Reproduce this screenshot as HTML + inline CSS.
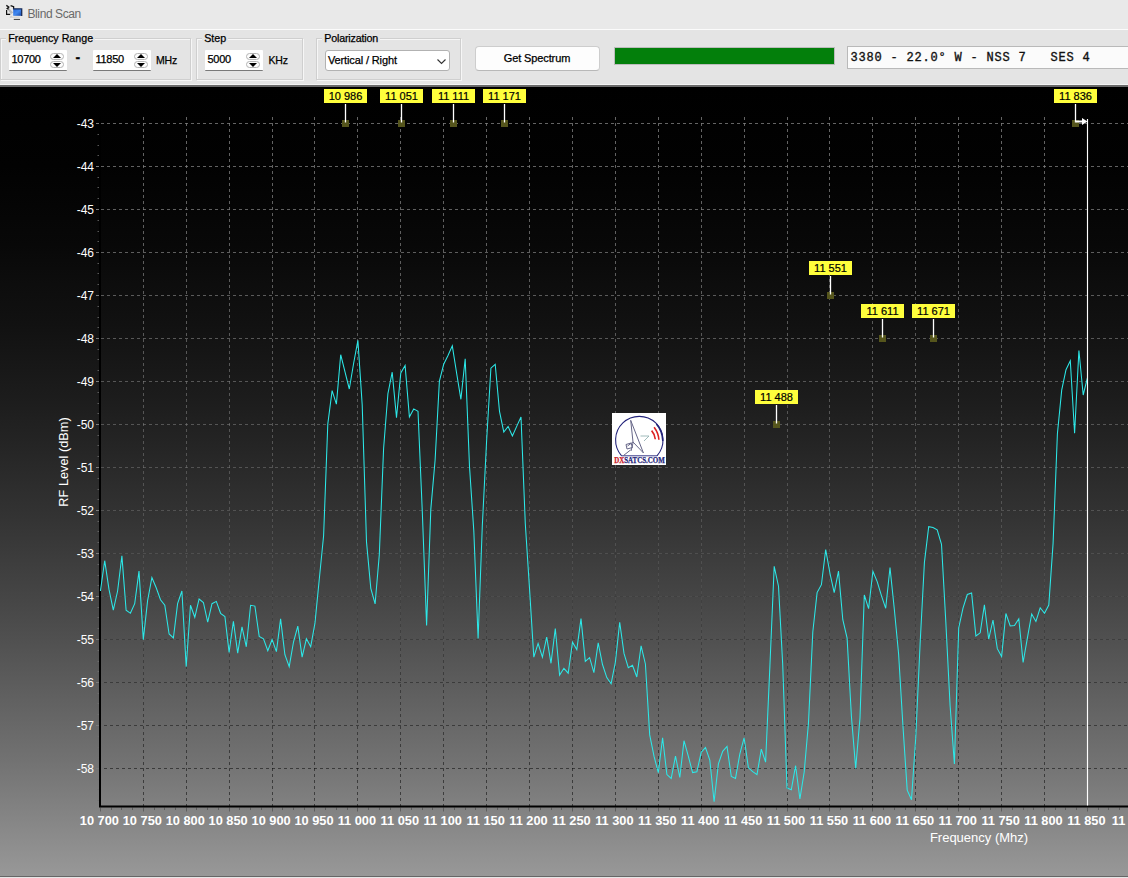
<!DOCTYPE html>
<html><head><meta charset="utf-8"><title>Blind Scan</title>
<style>
html,body{margin:0;padding:0;}
body{width:1128px;height:878px;overflow:hidden;background:#e4e4e4;font-family:"Liberation Sans",sans-serif;font-size:11px;color:#000;position:relative;}
.abs{position:absolute;}
#title{left:0;top:0;width:1128px;height:30px;background:#e9e9e9;border-bottom:1.5px solid #fbfbfb;box-sizing:border-box;}
#title span{position:absolute;left:27.5px;top:6.5px;font-size:12px;color:#6a6a6a;letter-spacing:-0.4px;}
.gb{position:absolute;margin-left:-0.5px;top:38px;height:42px;border:1px solid #cfcfcf;box-sizing:border-box;box-shadow:1px 1px 0 #f6f6f6, inset 1px 1px 0 #f6f6f6;}
.gb b{position:absolute;left:5.2px;top:-7px;background:#e4e4e4;padding:0 2px;font-weight:normal;font-size:10.7px;line-height:12px;white-space:nowrap;-webkit-text-stroke:0.25px #000;}
.inp{position:absolute;top:50px;height:21px;width:58px;background:#fff;border-bottom:1.5px solid #7a7a7a;box-sizing:border-box;border-radius:1px;}
.inp span{position:absolute;left:2.5px;top:2.6px;font-size:11px;letter-spacing:-0.3px;line-height:12px;-webkit-text-stroke:0.25px #000;}
.sp{position:absolute;left:41px;width:14px;height:7.5px;border:1px solid #b4b4b4;border-radius:4px;box-sizing:border-box;background:#fdfdfd;}
.sp.u{top:2.5px;} .sp.d{top:10.5px;}
.sp i{position:absolute;left:2px;width:0;height:0;border-left:4px solid transparent;border-right:4px solid transparent;}
.sp.u i{top:0.5px;border-bottom:4px solid #000;}
.sp.d i{top:1px;border-top:4px solid #000;}
.lbl{position:absolute;font-size:10.5px;letter-spacing:-0.2px;line-height:12px;-webkit-text-stroke:0.25px #000;white-space:nowrap;}
#combo{left:324.5px;top:49.5px;width:125px;height:21px;background:#fff;border:1px solid #b2b2b2;border-radius:3px;box-sizing:border-box;}
#combo span{position:absolute;left:2.5px;top:3.5px;font-size:11px;letter-spacing:-0.13px;line-height:12px;-webkit-text-stroke:0.25px #000;white-space:nowrap;}
#btn{left:474.5px;top:46px;width:125px;height:24.5px;background:#fdfdfd;border:1px solid #cdcdcd;border-bottom-color:#b8b8b8;border-radius:4px;box-sizing:border-box;text-align:center;}
#btn span{font-size:11px;letter-spacing:-0.12px;line-height:22px;-webkit-text-stroke:0.25px #000;}
#prog{left:613.5px;top:46.5px;width:221.5px;height:18.5px;background:#037f0b;border:1px solid #bcbcbc;box-sizing:border-box;}
#txt{left:846.5px;top:45.6px;width:281.5px;height:23px;background:#fbfbfb;border:1px solid #b9b9b9;border-right:none;box-sizing:border-box;overflow:hidden;}
#txt span{position:absolute;left:3px;top:4.6px;font-family:"Liberation Mono",monospace;font-size:12px;letter-spacing:0.8px;line-height:15px;white-space:pre;color:#111;-webkit-text-stroke:0.35px #111;}
#sep1{left:0;top:83.5px;width:1128px;height:1.5px;background:#f4f4f4;}
#sep2{left:0;top:85px;width:1128px;height:2px;background:#6a6a6a;}
#chart{left:0;top:87px;width:1128px;height:789px;}
#bot1{left:0;top:875.7px;width:1128px;height:1.3px;background:#666;}
#bot2{left:0;top:877px;width:1128px;height:1px;background:#e6e6e6;}
svg text{font-family:"Liberation Sans",sans-serif;}
.yl{font-size:12px;fill:#fff;}
.xl{font-size:12.8px;font-weight:bold;fill:#fff;}
.ttl{font-size:13px;fill:#fff;}
.ml{font-size:11px;fill:#000;stroke:#000;stroke-width:0.2px;}
.lg{font-family:"Liberation Serif",serif;font-weight:bold;font-size:8px;stroke-width:0.25px;}
</style></head><body>
<div id="title" class="abs">
<svg class="abs" style="left:0px;top:0px" width="26" height="24" viewBox="0 0 26 24">
<defs><linearGradient id="mon" x1="0" y1="0" x2="1" y2="1"><stop offset="0" stop-color="#2466d8"/><stop offset="0.5" stop-color="#4088f0"/><stop offset="1" stop-color="#1544a4"/></linearGradient></defs>
<path d="M8.2 7.2 L13.2 12.6 L11 14 L7.4 9.6 Z" fill="#b9b9b9"/>
<path d="M6.3 5.4 L8.8 7 L7.2 8.6 L8.6 9.2 M10.6 5.6 L13.6 6.6 L13.6 9" fill="none" stroke="#111" stroke-width="1.3"/>
<path d="M6.6 10 V14.3 H10.2" fill="none" stroke="#111" stroke-width="1.2"/>
<rect x="13.2" y="8.8" width="8.4" height="7" fill="url(#mon)"/>
<path d="M13 8.9 H21.7 V16" fill="none" stroke="#1a2c58" stroke-width="1.3"/>
<path d="M10.5 17.3 H19.5 M11.5 16.2 L10 17.6" stroke="#c9c9c9" stroke-width="1.1" fill="none"/>
<path d="M10.2 18.3 H19.8" stroke="#f4f4f4" stroke-width="0.9"/>
<path d="M13.8 19.4 H20" stroke="#222" stroke-width="0.9"/>
</svg>
<span>Blind Scan</span></div>
<div class="gb" style="left:0.5px;width:190.5px;"><b>Frequency Range</b></div>
<div class="gb" style="left:196.5px;width:106.5px;"><b>Step</b></div>
<div class="gb" style="left:316.5px;width:144.5px;"><b style="letter-spacing:-0.16px">Polarization</b></div>
<div class="inp" style="left:9px"><span>10700</span><div class="sp u"><i></i></div><div class="sp d"><i></i></div></div>
<div class="lbl" style="left:75.5px;top:50.5px;font-size:14px;font-weight:bold;">-</div>
<div class="inp" style="left:93px"><span>11850</span><div class="sp u"><i></i></div><div class="sp d"><i></i></div></div>
<div class="lbl" style="left:156px;top:54px;">MHz</div>
<div class="inp" style="left:205px"><span>5000</span><div class="sp u"><i></i></div><div class="sp d"><i></i></div></div>
<div class="lbl" style="left:268.5px;top:54px;">KHz</div>
<div id="combo" class="abs"><span>Vertical / Right</span>
<svg class="abs" style="left:110px;top:7px" width="11" height="7" viewBox="0 0 11 7"><path d="M1.5 1.5 L5.5 5.5 L9.5 1.5" fill="none" stroke="#333" stroke-width="1.1"/></svg></div>
<div id="btn" class="abs"><span>Get Spectrum</span></div>
<div id="prog" class="abs"></div>
<div id="txt" class="abs"><span>3380 - 22.0° W - NSS 7   SES 4</span></div>
<div id="sep1" class="abs"></div><div id="sep2" class="abs"></div>
<svg id="chart" class="abs" width="1128" height="789" viewBox="0 0 1128 789">
<defs><linearGradient id="bg" x1="0" y1="0" x2="0" y2="1"><stop offset="0.00" stop-color="rgb(0,0,0)"/><stop offset="0.05" stop-color="rgb(1,1,1)"/><stop offset="0.10" stop-color="rgb(2,2,2)"/><stop offset="0.15" stop-color="rgb(5,5,5)"/><stop offset="0.20" stop-color="rgb(8,8,8)"/><stop offset="0.25" stop-color="rgb(13,13,13)"/><stop offset="0.30" stop-color="rgb(17,17,17)"/><stop offset="0.35" stop-color="rgb(23,23,23)"/><stop offset="0.40" stop-color="rgb(29,29,29)"/><stop offset="0.45" stop-color="rgb(36,36,36)"/><stop offset="0.50" stop-color="rgb(44,44,44)"/><stop offset="0.55" stop-color="rgb(52,52,52)"/><stop offset="0.60" stop-color="rgb(61,61,61)"/><stop offset="0.65" stop-color="rgb(70,70,70)"/><stop offset="0.70" stop-color="rgb(80,80,80)"/><stop offset="0.75" stop-color="rgb(91,91,91)"/><stop offset="0.80" stop-color="rgb(102,102,102)"/><stop offset="0.85" stop-color="rgb(113,113,113)"/><stop offset="0.90" stop-color="rgb(126,126,126)"/><stop offset="0.95" stop-color="rgb(139,139,139)"/><stop offset="1.00" stop-color="rgb(152,152,152)"/></linearGradient></defs>
<rect x="0" y="0" width="1128" height="789" fill="url(#bg)"/>
<defs><linearGradient id="gk" gradientUnits="userSpaceOnUse" x1="0" y1="0" x2="0" y2="789"><stop offset="0" stop-color="#000" stop-opacity="0"/><stop offset="0.63" stop-color="#000" stop-opacity="0.04"/><stop offset="0.70" stop-color="#000" stop-opacity="0.22"/><stop offset="0.754" stop-color="#000" stop-opacity="0.36"/><stop offset="0.863" stop-color="#000" stop-opacity="0.5"/><stop offset="1" stop-color="#000" stop-opacity="0.55"/></linearGradient><linearGradient id="gg" gradientUnits="userSpaceOnUse" x1="0" y1="0" x2="0" y2="789"><stop offset="0" stop-color="#808080" stop-opacity="0.8"/><stop offset="0.2" stop-color="#808080" stop-opacity="0.72"/><stop offset="0.427" stop-color="#808080" stop-opacity="0.55"/><stop offset="0.536" stop-color="#808080" stop-opacity="0.42"/><stop offset="0.59" stop-color="#808080" stop-opacity="0.3"/><stop offset="0.66" stop-color="#808080" stop-opacity="0.08"/><stop offset="1" stop-color="#808080" stop-opacity="0"/></linearGradient></defs>
<path d="M143.5 30.0 V719.5 M186.5 30.0 V719.5 M229.5 30.0 V719.5 M272.5 30.0 V719.5 M314.5 30.0 V719.5 M357.5 30.0 V719.5 M400.5 30.0 V719.5 M443.5 30.0 V719.5 M486.5 30.0 V719.5 M529.5 30.0 V719.5 M572.5 30.0 V719.5 M615.5 30.0 V719.5 M658.5 30.0 V719.5 M701.5 30.0 V719.5 M744.5 30.0 V719.5 M787.5 30.0 V719.5 M829.5 30.0 V719.5 M872.5 30.0 V719.5 M915.5 30.0 V719.5 M958.5 30.0 V719.5 M1001.5 30.0 V719.5 M1044.5 30.0 V719.5 M101.0 681.5 H1128 M101.0 638.5 H1128 M101.0 595.5 H1128 M101.0 552.5 H1128 M101.0 509.5 H1128 M101.0 466.5 H1128 M101.0 423.5 H1128 M101.0 380.5 H1128 M101.0 337.5 H1128 M101.0 294.5 H1128 M101.0 251.5 H1128 M101.0 208.5 H1128 M101.0 165.5 H1128 M101.0 122.5 H1128 M101.0 79.5 H1128 M101.0 36.5 H1128" stroke="url(#gk)" stroke-width="1" fill="none" stroke-dasharray="3 3" stroke-dashoffset="3"/>
<path d="M143.5 30.0 V719.5 M186.5 30.0 V719.5 M229.5 30.0 V719.5 M272.5 30.0 V719.5 M314.5 30.0 V719.5 M357.5 30.0 V719.5 M400.5 30.0 V719.5 M443.5 30.0 V719.5 M486.5 30.0 V719.5 M529.5 30.0 V719.5 M572.5 30.0 V719.5 M615.5 30.0 V719.5 M658.5 30.0 V719.5 M701.5 30.0 V719.5 M744.5 30.0 V719.5 M787.5 30.0 V719.5 M829.5 30.0 V719.5 M872.5 30.0 V719.5 M915.5 30.0 V719.5 M958.5 30.0 V719.5 M1001.5 30.0 V719.5 M1044.5 30.0 V719.5 M101.0 681.5 H1128 M101.0 638.5 H1128 M101.0 595.5 H1128 M101.0 552.5 H1128 M101.0 509.5 H1128 M101.0 466.5 H1128 M101.0 423.5 H1128 M101.0 380.5 H1128 M101.0 337.5 H1128 M101.0 294.5 H1128 M101.0 251.5 H1128 M101.0 208.5 H1128 M101.0 165.5 H1128 M101.0 122.5 H1128 M101.0 79.5 H1128 M101.0 36.5 H1128" stroke="url(#gg)" stroke-width="1" fill="none" stroke-dasharray="3 3"/>
<path d="M96 36.5 H100" stroke="#7c7c7c" stroke-width="1"/>
<path d="M96 79.5 H100" stroke="#7c7c7c" stroke-width="1"/>
<path d="M96 122.5 H100" stroke="#7c7c7c" stroke-width="1"/>
<path d="M96 165.5 H100" stroke="#7c7c7c" stroke-width="1"/>
<path d="M96 208.5 H100" stroke="#7c7c7c" stroke-width="1"/>
<path d="M96 251.5 H100" stroke="#7c7c7c" stroke-width="1"/>
<path d="M96 294.5 H100" stroke="#7c7c7c" stroke-width="1"/>
<path d="M96 337.5 H100" stroke="#7c7c7c" stroke-width="1"/>
<path d="M96 380.5 H100" stroke="#7c7c7c" stroke-width="1"/>
<path d="M96 423.5 H100" stroke="#7c7c7c" stroke-width="1"/>
<path d="M96 466.5 H100" stroke="#7c7c7c" stroke-width="1"/>
<path d="M96 509.5 H100" stroke="#7c7c7c" stroke-width="1"/>
<path d="M96 552.5 H100" stroke="#7c7c7c" stroke-width="1"/>
<path d="M96 595.5 H100" stroke="#7c7c7c" stroke-width="1"/>
<path d="M96 638.5 H100" stroke="#7c7c7c" stroke-width="1"/>
<path d="M96 681.5 H100" stroke="#7c7c7c" stroke-width="1"/>
<path d="M100.5 720.5 V724.5 M111.5 720.5 V723.0 M121.5 720.5 V723.0 M132.5 720.5 V723.0 M143.5 720.5 V724.5 M154.5 720.5 V723.0 M164.5 720.5 V723.0 M175.5 720.5 V723.0 M186.5 720.5 V724.5 M196.5 720.5 V723.0 M207.5 720.5 V723.0 M218.5 720.5 V723.0 M229.5 720.5 V724.5 M239.5 720.5 V723.0 M250.5 720.5 V723.0 M261.5 720.5 V723.0 M272.5 720.5 V724.5 M282.5 720.5 V723.0 M293.5 720.5 V723.0 M304.5 720.5 V723.0 M314.5 720.5 V724.5 M325.5 720.5 V723.0 M336.5 720.5 V723.0 M347.5 720.5 V723.0 M357.5 720.5 V724.5 M368.5 720.5 V723.0 M379.5 720.5 V723.0 M390.5 720.5 V723.0 M400.5 720.5 V724.5 M411.5 720.5 V723.0 M422.5 720.5 V723.0 M432.5 720.5 V723.0 M443.5 720.5 V724.5 M454.5 720.5 V723.0 M465.5 720.5 V723.0 M475.5 720.5 V723.0 M486.5 720.5 V724.5 M497.5 720.5 V723.0 M508.5 720.5 V723.0 M518.5 720.5 V723.0 M529.5 720.5 V724.5 M540.5 720.5 V723.0 M551.5 720.5 V723.0 M561.5 720.5 V723.0 M572.5 720.5 V724.5 M583.5 720.5 V723.0 M593.5 720.5 V723.0 M604.5 720.5 V723.0 M615.5 720.5 V724.5 M626.5 720.5 V723.0 M636.5 720.5 V723.0 M647.5 720.5 V723.0 M658.5 720.5 V724.5 M669.5 720.5 V723.0 M679.5 720.5 V723.0 M690.5 720.5 V723.0 M701.5 720.5 V724.5 M711.5 720.5 V723.0 M722.5 720.5 V723.0 M733.5 720.5 V723.0 M744.5 720.5 V724.5 M754.5 720.5 V723.0 M765.5 720.5 V723.0 M776.5 720.5 V723.0 M787.5 720.5 V724.5 M797.5 720.5 V723.0 M808.5 720.5 V723.0 M819.5 720.5 V723.0 M829.5 720.5 V724.5 M840.5 720.5 V723.0 M851.5 720.5 V723.0 M862.5 720.5 V723.0 M872.5 720.5 V724.5 M883.5 720.5 V723.0 M894.5 720.5 V723.0 M905.5 720.5 V723.0 M915.5 720.5 V724.5 M926.5 720.5 V723.0 M937.5 720.5 V723.0 M947.5 720.5 V723.0 M958.5 720.5 V724.5 M969.5 720.5 V723.0 M980.5 720.5 V723.0 M990.5 720.5 V723.0 M1001.5 720.5 V724.5 M1012.5 720.5 V723.0 M1023.5 720.5 V723.0 M1033.5 720.5 V723.0 M1044.5 720.5 V724.5 M1055.5 720.5 V723.0 M1065.5 720.5 V723.0 M1076.5 720.5 V723.0 M1087.5 720.5 V724.5 M1098.5 720.5 V723.0 M1108.5 720.5 V723.0 M1119.5 720.5 V723.0" stroke="#5e5e5e" stroke-width="1" fill="none"/>
<path d="M97.5 47.5 H100 M97.5 58.5 H100 M97.5 68.5 H100 M97.5 90.5 H100 M97.5 100.5 H100 M97.5 111.5 H100 M97.5 133.5 H100 M97.5 144.5 H100 M97.5 154.5 H100 M97.5 176.5 H100 M97.5 186.5 H100 M97.5 197.5 H100 M97.5 219.5 H100 M97.5 230.5 H100 M97.5 240.5 H100 M97.5 262.5 H100 M97.5 272.5 H100 M97.5 283.5 H100 M97.5 305.5 H100 M97.5 316.5 H100 M97.5 326.5 H100 M97.5 348.5 H100 M97.5 358.5 H100 M97.5 369.5 H100 M97.5 391.5 H100 M97.5 402.5 H100 M97.5 412.5 H100 M97.5 434.5 H100 M97.5 444.5 H100 M97.5 455.5 H100 M97.5 477.5 H100 M97.5 488.5 H100 M97.5 498.5 H100 M97.5 520.5 H100 M97.5 530.5 H100 M97.5 541.5 H100 M97.5 563.5 H100 M97.5 574.5 H100 M97.5 584.5 H100 M97.5 606.5 H100 M97.5 616.5 H100 M97.5 627.5 H100 M97.5 649.5 H100 M97.5 660.5 H100 M97.5 670.5 H100 M97.5 692.5 H100 M97.5 702.5 H100 M97.5 713.5 H100" stroke="#747474" stroke-opacity="0.75" stroke-width="1" fill="none"/>
<path d="M100 30.0 V719.5 H1128" stroke="#000" stroke-width="2" fill="none"/>
<polyline points="100.4,504.0 104.7,473.7 109.0,502.4 113.3,523.1 117.6,504.0 121.9,468.9 126.1,523.1 130.4,526.3 134.7,516.7 139.0,484.1 143.3,552.6 147.6,513.6 151.9,490.5 156.2,500.8 160.5,512.8 164.8,518.3 169.1,547.0 173.4,551.0 177.6,516.7 181.9,504.0 186.2,579.7 190.5,518.3 194.8,530.3 199.1,512.0 203.4,515.5 207.7,535.1 212.0,516.7 216.3,514.4 220.6,526.3 224.9,529.5 229.1,565.4 233.4,534.3 237.7,566.1 242.0,539.9 246.3,559.8 250.6,518.3 254.9,519.1 259.2,549.4 263.5,551.8 267.8,563.8 272.1,552.6 276.4,564.6 280.6,531.9 284.9,567.7 289.2,579.7 293.5,555.0 297.8,539.1 302.1,570.1 306.4,551.8 310.7,559.8 315.0,535.9 319.3,492.0 323.6,448.7 327.8,337.0 332.1,303.6 336.4,317.1 340.7,267.7 345.0,284.8 349.3,302.0 353.6,276.5 357.9,253.4 362.2,317.9 366.5,454.9 370.8,501.3 375.1,516.9 379.3,467.8 383.6,361.5 387.9,306.7 392.2,285.2 396.5,330.6 400.8,286.0 405.1,278.4 409.4,329.9 413.7,321.9 418.0,324.3 422.3,424.8 426.6,538.4 430.8,422.4 435.1,373.3 439.4,294.0 443.7,277.3 448.0,268.5 452.3,258.9 456.6,286.0 460.9,312.3 465.2,271.7 469.5,379.5 473.8,443.9 478.1,551.6 482.3,439.1 486.6,354.0 490.9,281.2 495.2,277.3 499.5,324.3 503.8,345.0 508.1,339.4 512.4,349.0 516.7,339.4 521.0,329.9 525.3,436.7 529.5,501.3 533.8,570.1 538.1,556.4 542.4,570.1 546.7,550.2 551.0,576.3 555.3,541.5 559.6,588.1 563.9,581.3 568.2,586.2 572.5,555.2 576.8,562.6 581.0,531.6 585.3,574.4 589.6,570.7 593.9,585.6 598.2,555.8 602.5,577.5 606.8,590.6 611.1,596.8 615.4,575.1 619.7,535.3 624.0,566.4 628.3,580.6 632.5,578.2 636.8,590.0 641.1,558.9 645.4,577.0 649.7,647.9 654.0,669.2 658.3,685.6 662.6,650.8 666.9,687.6 671.2,691.4 675.5,669.2 679.8,690.5 684.0,653.7 688.3,669.2 692.6,685.6 696.9,684.7 701.2,665.3 705.5,660.5 709.8,673.0 714.1,714.7 718.4,676.9 722.7,664.3 727.0,659.5 731.3,689.5 735.5,691.4 739.8,667.2 744.1,650.8 748.4,680.8 752.7,684.7 757.0,687.6 761.3,662.2 765.6,675.2 769.9,579.0 774.2,479.3 778.5,499.2 782.7,577.4 787.0,701.0 791.3,702.8 795.6,678.7 799.9,712.0 804.2,685.0 808.5,635.6 812.8,545.0 817.1,505.6 821.4,497.7 825.7,462.6 830.0,486.5 834.2,505.6 838.5,484.1 842.8,532.7 847.1,551.1 851.4,629.2 855.7,681.4 860.0,630.8 864.3,508.0 868.6,521.6 872.9,484.3 877.2,494.6 881.5,508.8 885.7,521.3 890.0,480.6 894.3,522.0 898.6,567.0 902.9,638.2 907.2,703.1 911.5,712.8 915.8,649.8 920.1,557.0 924.4,475.6 928.7,439.7 933.0,440.5 937.2,442.9 941.5,457.3 945.8,534.6 950.1,618.8 954.4,676.9 958.7,541.0 963.0,521.1 967.3,507.5 971.6,505.9 975.9,549.0 980.2,545.8 984.4,517.9 988.7,552.2 993.0,533.0 997.3,561.7 1001.6,569.5 1005.9,526.5 1010.2,539.0 1014.5,538.6 1018.8,531.8 1023.1,575.5 1027.4,550.9 1031.7,527.0 1035.9,534.5 1040.2,520.8 1044.5,526.3 1048.8,518.0 1053.1,456.1 1057.4,346.7 1061.7,303.2 1066.0,282.7 1070.3,273.8 1074.6,346.2 1078.9,263.5 1083.2,308.0 1087.4,290.9" fill="none" stroke="#2ce8e8" stroke-width="1.05" stroke-linejoin="miter"/>
<path d="M1087.5 32.0 V718.5" stroke="#fff" stroke-width="1.15"/>
<text x="94" y="686.1" text-anchor="end" class="yl">-58</text>
<text x="94" y="643.1" text-anchor="end" class="yl">-57</text>
<text x="94" y="600.1" text-anchor="end" class="yl">-56</text>
<text x="94" y="557.1" text-anchor="end" class="yl">-55</text>
<text x="94" y="514.1" text-anchor="end" class="yl">-54</text>
<text x="94" y="471.1" text-anchor="end" class="yl">-53</text>
<text x="94" y="428.1" text-anchor="end" class="yl">-52</text>
<text x="94" y="385.1" text-anchor="end" class="yl">-51</text>
<text x="94" y="342.1" text-anchor="end" class="yl">-50</text>
<text x="94" y="299.1" text-anchor="end" class="yl">-49</text>
<text x="94" y="256.1" text-anchor="end" class="yl">-48</text>
<text x="94" y="213.1" text-anchor="end" class="yl">-47</text>
<text x="94" y="170.1" text-anchor="end" class="yl">-46</text>
<text x="94" y="127.1" text-anchor="end" class="yl">-45</text>
<text x="94" y="84.1" text-anchor="end" class="yl">-44</text>
<text x="94" y="41.1" text-anchor="end" class="yl">-43</text>
<text x="99.4" y="738.4" text-anchor="middle" class="xl">10 700</text>
<text x="142.3" y="738.4" text-anchor="middle" class="xl">10 750</text>
<text x="185.2" y="738.4" text-anchor="middle" class="xl">10 800</text>
<text x="228.1" y="738.4" text-anchor="middle" class="xl">10 850</text>
<text x="271.1" y="738.4" text-anchor="middle" class="xl">10 900</text>
<text x="314.0" y="738.4" text-anchor="middle" class="xl">10 950</text>
<text x="356.9" y="738.4" text-anchor="middle" class="xl">11 000</text>
<text x="399.8" y="738.4" text-anchor="middle" class="xl">11 050</text>
<text x="442.7" y="738.4" text-anchor="middle" class="xl">11 100</text>
<text x="485.6" y="738.4" text-anchor="middle" class="xl">11 150</text>
<text x="528.5" y="738.4" text-anchor="middle" class="xl">11 200</text>
<text x="571.5" y="738.4" text-anchor="middle" class="xl">11 250</text>
<text x="614.4" y="738.4" text-anchor="middle" class="xl">11 300</text>
<text x="657.3" y="738.4" text-anchor="middle" class="xl">11 350</text>
<text x="700.2" y="738.4" text-anchor="middle" class="xl">11 400</text>
<text x="743.1" y="738.4" text-anchor="middle" class="xl">11 450</text>
<text x="786.0" y="738.4" text-anchor="middle" class="xl">11 500</text>
<text x="829.0" y="738.4" text-anchor="middle" class="xl">11 550</text>
<text x="871.9" y="738.4" text-anchor="middle" class="xl">11 600</text>
<text x="914.8" y="738.4" text-anchor="middle" class="xl">11 650</text>
<text x="957.7" y="738.4" text-anchor="middle" class="xl">11 700</text>
<text x="1000.6" y="738.4" text-anchor="middle" class="xl">11 750</text>
<text x="1043.5" y="738.4" text-anchor="middle" class="xl">11 800</text>
<text x="1086.4" y="738.4" text-anchor="middle" class="xl">11 850</text>
<text x="1131.0" y="738.4" text-anchor="middle" class="xl">11 900</text>
<text x="979" y="755.0" text-anchor="middle" class="ttl">Frequency (Mhz)</text>
<text transform="translate(67.9 375.0) rotate(-90)" text-anchor="middle" class="ttl" style="font-size:12.75px">RF Level (dBm)</text>
<rect x="342.0" y="33.0" width="7" height="7" fill="#55551c"/>
<path d="M345.5 17.0 V35.5" stroke="#fff" stroke-width="1.3"/>
<rect x="324.0" y="2.0" width="43" height="14" fill="#ffff3c"/>
<text x="345.5" y="13.0" text-anchor="middle" class="ml">10 986</text>
<rect x="398.0" y="33.0" width="7" height="7" fill="#55551c"/>
<path d="M401.5 17.0 V35.5" stroke="#fff" stroke-width="1.3"/>
<rect x="380.0" y="2.0" width="43" height="14" fill="#ffff3c"/>
<text x="401.5" y="13.0" text-anchor="middle" class="ml">11 051</text>
<rect x="450.0" y="33.0" width="7" height="7" fill="#55551c"/>
<path d="M453.5 17.0 V35.5" stroke="#fff" stroke-width="1.3"/>
<rect x="432.0" y="2.0" width="43" height="14" fill="#ffff3c"/>
<text x="453.5" y="13.0" text-anchor="middle" class="ml">11 111</text>
<rect x="501.0" y="33.0" width="7" height="7" fill="#55551c"/>
<path d="M504.5 17.0 V35.5" stroke="#fff" stroke-width="1.3"/>
<rect x="483.0" y="2.0" width="43" height="14" fill="#ffff3c"/>
<text x="504.5" y="13.0" text-anchor="middle" class="ml">11 171</text>
<rect x="1072.0" y="33.0" width="7" height="7" fill="#55551c"/>
<path d="M1075.5 17.0 V35.5" stroke="#fff" stroke-width="1.3"/>
<rect x="1054.0" y="2.0" width="43" height="14" fill="#ffff3c"/>
<text x="1075.5" y="13.0" text-anchor="middle" class="ml">11 836</text>
<rect x="827.0" y="205.0" width="7" height="7" fill="#55551c"/>
<path d="M830.5 189.0 V207.5" stroke="#fff" stroke-width="1.3"/>
<rect x="809.0" y="174.0" width="43" height="14" fill="#ffff3c"/>
<text x="830.5" y="185.0" text-anchor="middle" class="ml">11 551</text>
<rect x="879.0" y="248.0" width="7" height="7" fill="#55551c"/>
<path d="M882.5 232.0 V250.5" stroke="#fff" stroke-width="1.3"/>
<rect x="861.0" y="217.0" width="43" height="14" fill="#ffff3c"/>
<text x="882.5" y="228.0" text-anchor="middle" class="ml">11 611</text>
<rect x="930.0" y="248.0" width="7" height="7" fill="#55551c"/>
<path d="M933.5 232.0 V250.5" stroke="#fff" stroke-width="1.3"/>
<rect x="912.0" y="217.0" width="43" height="14" fill="#ffff3c"/>
<text x="933.5" y="228.0" text-anchor="middle" class="ml">11 671</text>
<rect x="773.0" y="334.0" width="7" height="7" fill="#55551c"/>
<path d="M776.5 318.0 V336.5" stroke="#fff" stroke-width="1.3"/>
<rect x="755.0" y="303.0" width="43" height="14" fill="#ffff3c"/>
<text x="776.5" y="314.0" text-anchor="middle" class="ml">11 488</text>
<path d="M1076 33.5 H1082 V31.0 L1087.5 34.5 L1082 38.0 V35.5 H1076 Z" fill="#fff"/>
<g transform="translate(612 326)">
<rect x="0" y="0" width="54" height="52" fill="#fff"/>
<path d="M9.6 42.8 A23.7 23.7 0 1 1 45 42.8" fill="none" stroke="#23237a" stroke-width="1.1"/>
<path d="M9.6 42.8 H45" stroke="#23237a" stroke-width="0.9"/>
<path d="M18.7 7.3 L31.4 39.9 L21 29 Z M21 29 L15.5 33 M14 31.5 L19 30 L20.5 34.5 L15 36 Z M18.5 37 L11.5 42.5 M21 30 L19 38" fill="none" stroke="#666688" stroke-width="1"/>
<path d="M28.5 23 H37 L32 28" fill="none" stroke="#8aa" stroke-width="0.8"/>
<path d="M39.6 17.6 Q43 21.5 43.3 26.2" fill="none" stroke="#d22" stroke-width="1.6"/>
<path d="M42.1 14.2 Q46.5 20 46.9 26.7" fill="none" stroke="#d22" stroke-width="1.6"/>
<path d="M44.4 10.9 Q50.5 18 50.8 28" fill="none" stroke="#23237a" stroke-width="1.5"/>
<text x="2.2" y="50.3" class="lg" textLength="50.5" lengthAdjust="spacingAndGlyphs"><tspan fill="#c8202a" stroke="#c8202a">DX</tspan><tspan fill="#23237a" stroke="#23237a">SATCS.COM</tspan></text>
</g>
</svg>
<div id="bot1" class="abs"></div><div id="bot2" class="abs"></div>
</body></html>
